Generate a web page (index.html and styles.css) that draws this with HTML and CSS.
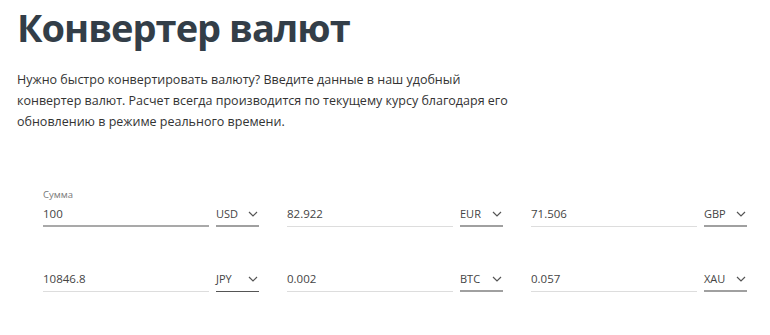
FILE: index.html
```html
<!DOCTYPE html>
<html lang="ru">
<head>
<meta charset="utf-8">
<title>Конвертер валют</title>
<link rel="stylesheet" href="styles.css">
</head>
<body>
<main class="page">
  <h1 class="title">Конвертер валют</h1>
  <p class="intro">Нужно быстро конвертировать валюту? Введите данные в наш удобный<br>конвертер валют. Расчет всегда производится по текущему курсу благодаря его<br>обновлению в режиме реального времени.</p>

  <section class="converter">
    <div class="field">
      <div class="label">Сумма</div>
      <div class="controls">
        <div class="input input-active">100</div>
        <div class="select select-active"><span>USD</span><svg class="chev" viewBox="0 0 10 6"><path d="M1 1l4 4 4-4"/></svg></div>
      </div>
    </div>
    <div class="field">
      <div class="label"></div>
      <div class="controls">
        <div class="input">82.922</div>
        <div class="select"><span>EUR</span><svg class="chev" viewBox="0 0 10 6"><path d="M1 1l4 4 4-4"/></svg></div>
      </div>
    </div>
    <div class="field">
      <div class="label"></div>
      <div class="controls">
        <div class="input">71.506</div>
        <div class="select"><span>GBP</span><svg class="chev" viewBox="0 0 10 6"><path d="M1 1l4 4 4-4"/></svg></div>
      </div>
    </div>
    <div class="field">
      <div class="label"></div>
      <div class="controls">
        <div class="input">10846.8</div>
        <div class="select select-dark"><span>JPY</span><svg class="chev" viewBox="0 0 10 6"><path d="M1 1l4 4 4-4"/></svg></div>
      </div>
    </div>
    <div class="field">
      <div class="label"></div>
      <div class="controls">
        <div class="input">0.002</div>
        <div class="select"><span>BTC</span><svg class="chev" viewBox="0 0 10 6"><path d="M1 1l4 4 4-4"/></svg></div>
      </div>
    </div>
    <div class="field">
      <div class="label"></div>
      <div class="controls">
        <div class="input">0.057</div>
        <div class="select"><span>XAU</span><svg class="chev" viewBox="0 0 10 6"><path d="M1 1l4 4 4-4"/></svg></div>
      </div>
    </div>
  </section>
</main>
</body>
</html>
```
FILE: styles.css
```css
html, body {
  margin: 0;
  padding: 0;
  background: #ffffff;
}

body {
  font-family: "Open Sans", "Noto Sans", "Liberation Sans", sans-serif;
  color: #333333;
}

.page {
  padding: 0 17px;
}

.title {
  margin: 0;
  padding-top: 1px;
  font-size: 38px;
  line-height: 52px;
  font-weight: 700;
  color: #333e48;
  letter-spacing: -1px;
}

.intro {
  margin: 16px 0 0;
  font-size: 12.5px;
  line-height: 21px;
  color: #333333;
  white-space: nowrap;
}

.converter {
  margin: 56px 0 0 26px;
  display: grid;
  grid-template-columns: repeat(3, 217px);
  column-gap: 27px;
  row-gap: 26px;
}

.field {
  display: flex;
  flex-direction: column;
}

.label {
  height: 13px;
  font-size: 9.5px;
  line-height: 13px;
  color: #777777;
}

.controls {
  display: flex;
  gap: 7px;
  align-items: flex-end;
}

.input {
  flex: 0 0 166px;
  height: 26px;
  box-sizing: border-box;
  padding-top: 5px;
  font-size: 11.5px;
  line-height: 15px;
  color: #444444;
  border-bottom: 1px solid #dddddd;
}

.input-active {
  border-bottom: 2px solid #a9a9a9;
}

.select {
  flex: 0 0 43px;
  height: 26px;
  box-sizing: border-box;
  padding-top: 5px;
  display: flex;
  align-items: flex-start;
  justify-content: space-between;
  font-size: 11px;
  line-height: 15px;
  color: #444444;
  border-bottom: 2px solid #a0a0a0;
}

.select-dark {
  border-bottom: 1px solid #555555;
}

.chev {
  width: 10px;
  height: 6px;
  margin: 5px 1px 0 0;
  fill: none;
  stroke: #555555;
  stroke-width: 1.2;
}
```
